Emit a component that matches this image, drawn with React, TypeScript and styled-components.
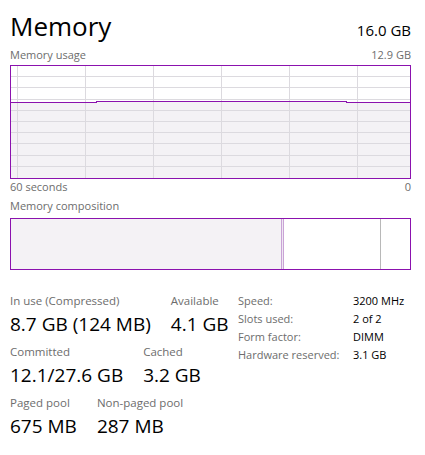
import React from "react";
import styled, { createGlobalStyle } from "styled-components";

const PURPLE = "#8b12ae";
const FILL = "#f4f2f5";
const GRID = "#dcdadf";
const LABEL = "#6d6d6d";

const GlobalStyle = createGlobalStyle`
  html, body { margin: 0; padding: 0; background: #ffffff; }
  body { font-family: "Open Sans", "Noto Sans", sans-serif; color: #000; }
`;

const Panel = styled.div`
  width: 401px;
  padding: 8px 14px 0 10px;
  display: flex;
  flex-direction: column;
`;

const Header = styled.div`
  display: flex;
  justify-content: space-between;
  align-items: baseline;
  height: 36px;
`;

const Title = styled.h1`
  margin: 0;
  font-size: 26px;
  font-weight: 400;
  line-height: 36px;
  color: #000;
`;

const Total = styled.span`
  font-size: 15px;
  line-height: 20px;
  color: #000;
`;

const Caption = styled.div<{ $gap: number }>`
  display: flex;
  justify-content: space-between;
  margin-top: ${(p) => p.$gap}px;
  font-size: 11px;
  line-height: 14px;
  color: ${LABEL};
`;

const GraphFrame = styled.div`
  margin-top: 3px;
  border: 1px solid ${PURPLE};
  height: 112px;
  background: #fff;
  svg { display: block; }
`;

const CompositionBar = styled.div`
  margin-top: 5px;
  border: 1px solid ${PURPLE};
  height: 50px;
  display: flex;
`;

const Segment = styled.div<{ $kind: "inuse" | "modified" | "standby" | "free" }>`
  flex-basis: 0;
  min-width: 0;
  background: ${(p) =>
    p.$kind === "inuse" ? FILL : p.$kind === "modified" ? "#efe7f2" : "#ffffff"};
  border-left: ${(p) => (p.$kind === "modified" ? "1px solid #c9a3d6" : "none")};
  border-right: ${(p) =>
    p.$kind === "modified"
      ? "1px solid #c9a3d6"
      : p.$kind === "standby"
      ? "1px solid #b8b8b8"
      : "none"};
`;

const Stats = styled.div`
  display: flex;
  align-items: flex-start;
  margin-top: 23px;
`;

const Figures = styled.div`
  width: 228px;
  display: flex;
  flex-direction: column;
  gap: 7px;
`;

const FigureRow = styled.div`
  display: flex;
  gap: 20px;
`;

const Figure = styled.div`
  display: flex;
  flex-direction: column;
  gap: 2px;
`;

const FigureLabel = styled.span`
  font-size: 11.5px;
  line-height: 16px;
  color: ${LABEL};
  white-space: nowrap;
`;

const FigureValue = styled.span`
  font-size: 19px;
  line-height: 26px;
  color: #000;
  white-space: nowrap;
`;

const Specs = styled.dl`
  margin: -1px 0 0 0;
  display: grid;
  grid-template-columns: 115px auto;
  align-content: start;
  font-size: 11px;
  line-height: 18px;
`;

const SpecLabel = styled.dt`
  margin: 0;
  color: ${LABEL};
  white-space: nowrap;
`;

const SpecValue = styled.dd`
  margin: 0;
  color: #000;
  white-space: nowrap;
`;

const W = 399;
const H = 112;

function UsageGraph() {
  const level = [
    [0, 36],
    [85, 36],
    [85, 35],
    [335, 35],
    [335, 36],
    [W, 36],
  ];
  const top = level.map(([x, y], i) => `${i ? "L" : "M"}${x},${y + 0.5}`).join(" ");
  const area = `${top} L${W},${H} L0,${H} Z`;
  const hLines = Array.from({ length: 9 }, (_, i) => Math.round((i + 1) * 11.2) - 1 + 0.5);
  const vLines = [6, 74, 142, 210, 278, 346].map((x) => x + 0.5);
  return (
    <GraphFrame>
      <svg width={W} height={H} viewBox={`0 0 ${W} ${H}`} shapeRendering="crispEdges">
        <path d={area} fill={FILL} />
        {hLines.map((y) => (
          <line key={`h${y}`} x1={0} x2={W} y1={y} y2={y} stroke={GRID} strokeWidth={1} />
        ))}
        {vLines.map((x) => (
          <line key={`v${x}`} x1={x} x2={x} y1={0} y2={H} stroke={GRID} strokeWidth={1} />
        ))}
        <path d={top} fill="none" stroke={PURPLE} strokeWidth={1} />
      </svg>
    </GraphFrame>
  );
}

const composition: { kind: "inuse" | "modified" | "standby" | "free"; gb: number }[] = [
  { kind: "inuse", gb: 8.7 },
  { kind: "modified", gb: 0.064 },
  { kind: "standby", gb: 3.09 },
  { kind: "free", gb: 0.93 },
];

const figures = [
  [
    ["In use (Compressed)", "8.7 GB (124 MB)"],
    ["Available", "4.1 GB"],
  ],
  [
    ["Committed", "12.1/27.6 GB"],
    ["Cached", "3.2 GB"],
  ],
  [
    ["Paged pool", "675 MB"],
    ["Non-paged pool", "287 MB"],
  ],
];

const specs = [
  ["Speed:", "3200 MHz"],
  ["Slots used:", "2 of 2"],
  ["Form factor:", "DIMM"],
  ["Hardware reserved:", "3.1 GB"],
];

export default function App() {
  return (
    <>
      <GlobalStyle />
      <Panel>
        <Header>
          <Title>Memory</Title>
          <Total>16.0 GB</Total>
        </Header>
        <Caption $gap={4}>
          <span>Memory usage</span>
          <span>12.9 GB</span>
        </Caption>
        <UsageGraph />
        <Caption $gap={1}>
          <span>60 seconds</span>
          <span>0</span>
        </Caption>
        <Caption $gap={5}>
          <span>Memory composition</span>
        </Caption>
        <CompositionBar>
          {composition.map((s) => (
            <Segment key={s.kind} $kind={s.kind} style={{ flexGrow: s.gb }} />
          ))}
        </CompositionBar>
        <Stats>
          <Figures>
            {figures.map((row, i) => (
              <FigureRow key={i}>
                {row.map(([label, value]) => (
                  <Figure key={label}>
                    <FigureLabel>{label}</FigureLabel>
                    <FigureValue>{value}</FigureValue>
                  </Figure>
                ))}
              </FigureRow>
            ))}
          </Figures>
          <Specs>
            {specs.map(([label, value]) => (
              <React.Fragment key={label}>
                <SpecLabel>{label}</SpecLabel>
                <SpecValue>{value}</SpecValue>
              </React.Fragment>
            ))}
          </Specs>
        </Stats>
      </Panel>
    </>
  );
}
